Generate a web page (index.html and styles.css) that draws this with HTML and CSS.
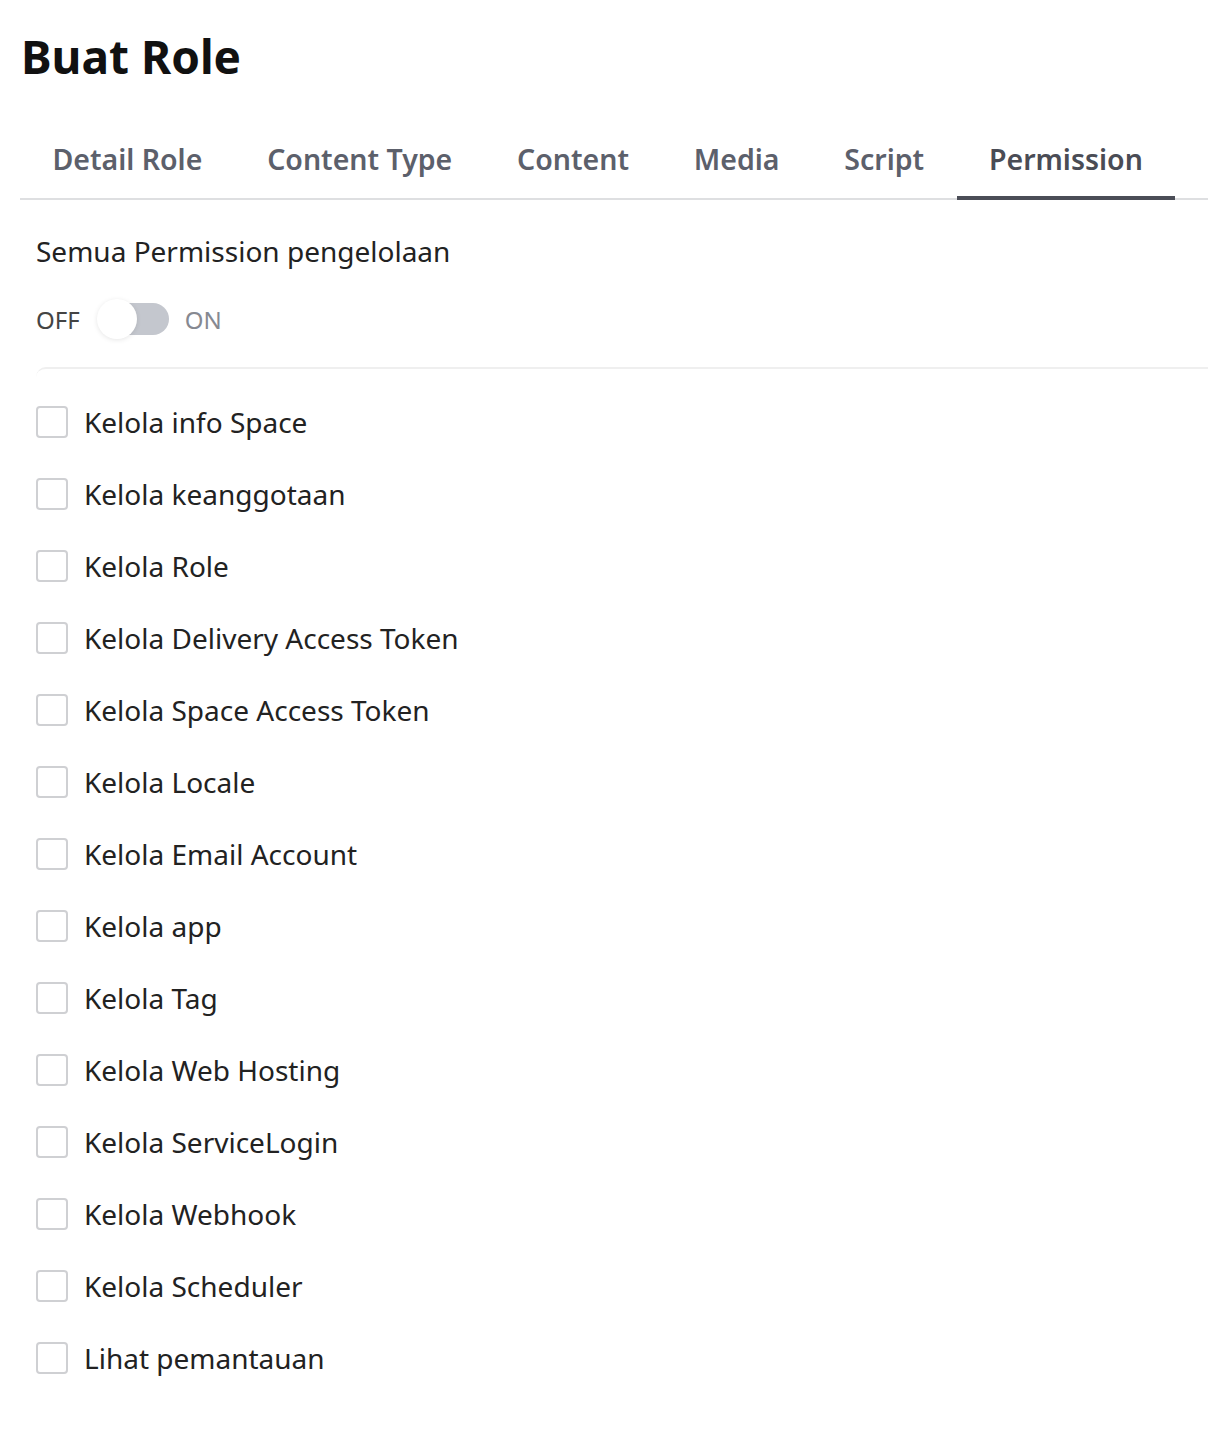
FILE: index.html
```html
<!DOCTYPE html>
<html lang="id">
<head>
<meta charset="utf-8">
<title>Buat Role</title>
<link rel="stylesheet" href="styles.css">
</head>
<body>
<div class="page">
  <h1 class="title">Buat Role</h1>
  <nav class="tabs">
    <div class="tab">Detail Role</div>
    <div class="tab">Content Type</div>
    <div class="tab">Content</div>
    <div class="tab">Media</div>
    <div class="tab">Script</div>
    <div class="tab active">Permission</div>
  </nav>
  <section class="panel">
    <div class="all">
      <div class="all-label">Semua Permission pengelolaan</div>
      <div class="switch-row">
        <span class="off">OFF</span>
        <span class="switch"><span class="knob"></span></span>
        <span class="on">ON</span>
      </div>
    </div>
    <ul class="list">
      <li class="item"><span class="box"></span><span>Kelola info Space</span></li>
      <li class="item"><span class="box"></span><span>Kelola keanggotaan</span></li>
      <li class="item"><span class="box"></span><span>Kelola Role</span></li>
      <li class="item"><span class="box"></span><span>Kelola Delivery Access Token</span></li>
      <li class="item"><span class="box"></span><span>Kelola Space Access Token</span></li>
      <li class="item"><span class="box"></span><span>Kelola Locale</span></li>
      <li class="item"><span class="box"></span><span>Kelola Email Account</span></li>
      <li class="item"><span class="box"></span><span>Kelola app</span></li>
      <li class="item"><span class="box"></span><span>Kelola Tag</span></li>
      <li class="item"><span class="box"></span><span>Kelola Web Hosting</span></li>
      <li class="item"><span class="box"></span><span>Kelola ServiceLogin</span></li>
      <li class="item"><span class="box"></span><span>Kelola Webhook</span></li>
      <li class="item"><span class="box"></span><span>Kelola Scheduler</span></li>
      <li class="item"><span class="box"></span><span>Lihat pemantauan</span></li>
    </ul>
  </section>
</div>
</body>
</html>
```
FILE: styles.css
```css
* { box-sizing: border-box; }
html, body { margin: 0; padding: 0; background: #fff; }
body {
  font-family: "Noto Sans", "Open Sans", sans-serif;
  color: #222;
}
.page {
  padding: 24px 0 0 20px;
}
.title {
  margin: 0 0 0 1px;
  font-size: 46px;
  line-height: 64px;
  font-weight: 700;
  color: #111;
}
.tabs {
  display: flex;
  margin-top: 42px;
  border-bottom: 2px solid #dedfe1;
}
.tab {
  padding: 9px 32.4px 0;
  font-size: 28.5px;
  font-weight: 600;
  line-height: 40px;
  height: 70px;
  color: #5c606b;
  border-bottom: 4px solid transparent;
  margin-bottom: -2px;
}
.tab.active {
  color: #4a4c55;
  border-bottom-color: #4b4d57;
}
.panel {
  padding-left: 16px;
}
.all {
  padding-top: 31px;
  padding-bottom: 28px;
}
.all-label {
  font-size: 28px;
  line-height: 40px;
  color: #222;
}
.switch-row {
  display: flex;
  align-items: center;
  margin-top: 28px;
  height: 40px;
}
.off {
  font-size: 24px;
  color: #444;
}
.on {
  font-size: 24px;
  color: #868991;
}
.switch {
  position: relative;
  width: 68px;
  height: 32px;
  margin: 0 16px 0 21px;
  border-radius: 16px;
  background: #c4c7ce;
}
.knob {
  position: absolute;
  left: -4px;
  top: -4px;
  width: 40px;
  height: 40px;
  border-radius: 50%;
  background: #fff;
  box-shadow: 0 1px 5px rgba(0,0,0,0.10);
}
.list {
  list-style: none;
  margin: 0;
  padding: 17px 0 0;
  border-top: 2px solid #efefef;
  border-top-left-radius: 10px;
}
.item {
  display: flex;
  align-items: center;
  height: 72px;
  font-size: 28px;
  color: #222;
}
.box {
  flex: none;
  width: 32px;
  height: 32px;
  border: 2px solid #cfd0d3;
  border-radius: 4px;
  margin-right: 16px;
  background: #fff;
}
```
